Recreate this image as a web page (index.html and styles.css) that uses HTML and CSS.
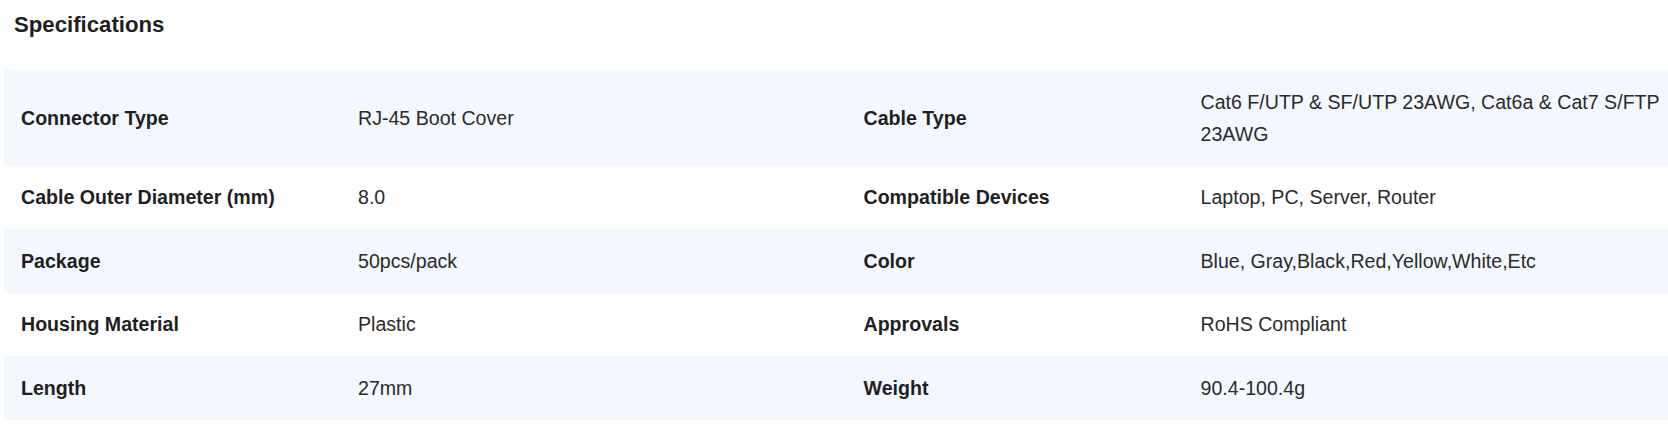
FILE: index.html
```html
<!DOCTYPE html>
<html lang="en">
<head>
<meta charset="utf-8">
<title>Specifications</title>
<link rel="stylesheet" href="styles.css">
</head>
<body>
<section class="specs">
  <h2 class="specs-title">Specifications</h2>
  <div class="spec-table">
    <div class="spec-row">
      <div class="spec-label">Connector Type</div>
      <div class="spec-value">RJ-45 Boot Cover</div>
      <div class="spec-label">Cable Type</div>
      <div class="spec-value">Cat6 F/UTP &amp; SF/UTP 23AWG, Cat6a &amp; Cat7 S/FTP 23AWG</div>
    </div>
    <div class="spec-row">
      <div class="spec-label">Cable Outer Diameter (mm)</div>
      <div class="spec-value">8.0</div>
      <div class="spec-label">Compatible Devices</div>
      <div class="spec-value">Laptop, PC, Server, Router</div>
    </div>
    <div class="spec-row">
      <div class="spec-label">Package</div>
      <div class="spec-value">50pcs/pack</div>
      <div class="spec-label">Color</div>
      <div class="spec-value">Blue, Gray,Black,Red,Yellow,White,Etc</div>
    </div>
    <div class="spec-row">
      <div class="spec-label">Housing Material</div>
      <div class="spec-value">Plastic</div>
      <div class="spec-label">Approvals</div>
      <div class="spec-value">RoHS Compliant</div>
    </div>
    <div class="spec-row">
      <div class="spec-label">Length</div>
      <div class="spec-value">27mm</div>
      <div class="spec-label">Weight</div>
      <div class="spec-value">90.4-100.4g</div>
    </div>
  </div>
</section>
</body>
</html>
```

FILE: styles.css
```css
html, body {
  margin: 0;
  padding: 0;
  overflow: hidden;
  background: #ffffff;
}

body {
  font-family: "Liberation Sans", Arial, sans-serif;
  color: #222222;
}

.specs {
  padding: 12px 0 0 4px;
}

.specs-title {
  margin: 0 0 33px 10px;
  font-size: 22.2px;
  font-weight: 700;
  line-height: 25px;
  color: #1f1f1f;
}

.spec-table {
  width: 1685px;
}

.spec-row {
  display: grid;
  grid-template-columns: 20% 30% 20% 30%;
  align-items: center;
}

.spec-row:nth-child(odd) {
  background: #f3f8fe;
}

.spec-label,
.spec-value {
  padding: 15.5px 17px 16px;
  font-size: 19.6px;
  line-height: 32px;
}

.spec-label {
  font-weight: 700;
  color: #1f1f1f;
}

.spec-value {
  font-weight: 400;
  color: #2a2a2a;
}
```
